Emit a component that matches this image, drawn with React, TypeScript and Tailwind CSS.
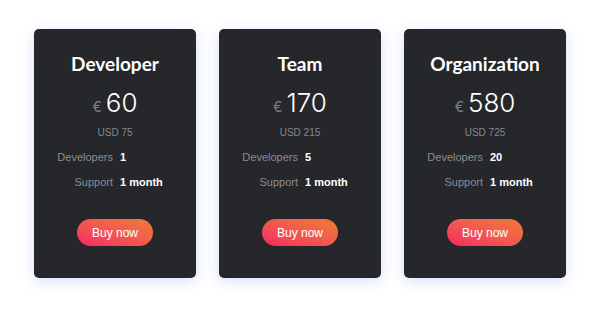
const plans = [
  { name: "Developer", price: 60, usd: 75, devs: "1", support: "1 month" },
  { name: "Team", price: 170, usd: 215, devs: "5", support: "1 month" },
  { name: "Organization", price: 580, usd: 725, devs: "20", support: "1 month" },
];

const PlanCard = ({ plan }: { plan: (typeof plans)[number] }) => {
  return (
    <div className="flex h-[249px] w-[162px] flex-col items-center rounded-[5px] bg-[#26272a] pt-[22px] shadow-[0_3px_14px_rgba(70,110,230,0.22)]">
      <div className="font-['Lato',sans-serif] text-[19px] leading-[26px] font-bold text-white">{plan.name}</div>

      <div className="mt-[10px] flex items-baseline font-['Inter',sans-serif]">
        <span className="mr-[4px] text-[14px] text-[#7d8088]">€</span>
        <span className="text-[26px] leading-[32px] font-light text-white">{plan.price}</span>
      </div>

      <div className="mt-[6px] font-['Liberation_Sans',sans-serif] text-[10px] text-[#85878f]">USD {plan.usd}</div>

      <div className="mt-[10px] grid w-full grid-cols-[79px_1fr] gap-x-[7px] gap-y-[11px] font-['Liberation_Sans',sans-serif] text-[11px] leading-[14px]">
        <div className="text-right text-[#8a8c93]">Developers</div>
        <div className="font-bold text-white">{plan.devs}</div>
        <div className="text-right text-[#8a8c93]">Support</div>
        <div className="font-bold text-white">{plan.support}</div>
      </div>

      <button className="mt-[30px] h-[27px] w-[76px] rounded-full bg-gradient-to-tr from-[#f5205f] to-[#ee7b35] font-['Liberation_Sans',sans-serif] text-[12px] text-white">
        Buy now
      </button>
    </div>
  );
};

export default function App() {
  return (
    <div className="flex h-[312px] w-[600px] justify-center gap-[23px] bg-white pt-[29px]">
      {plans.map((p) => (
        <PlanCard key={p.name} plan={p} />
      ))}
    </div>
  );
}
